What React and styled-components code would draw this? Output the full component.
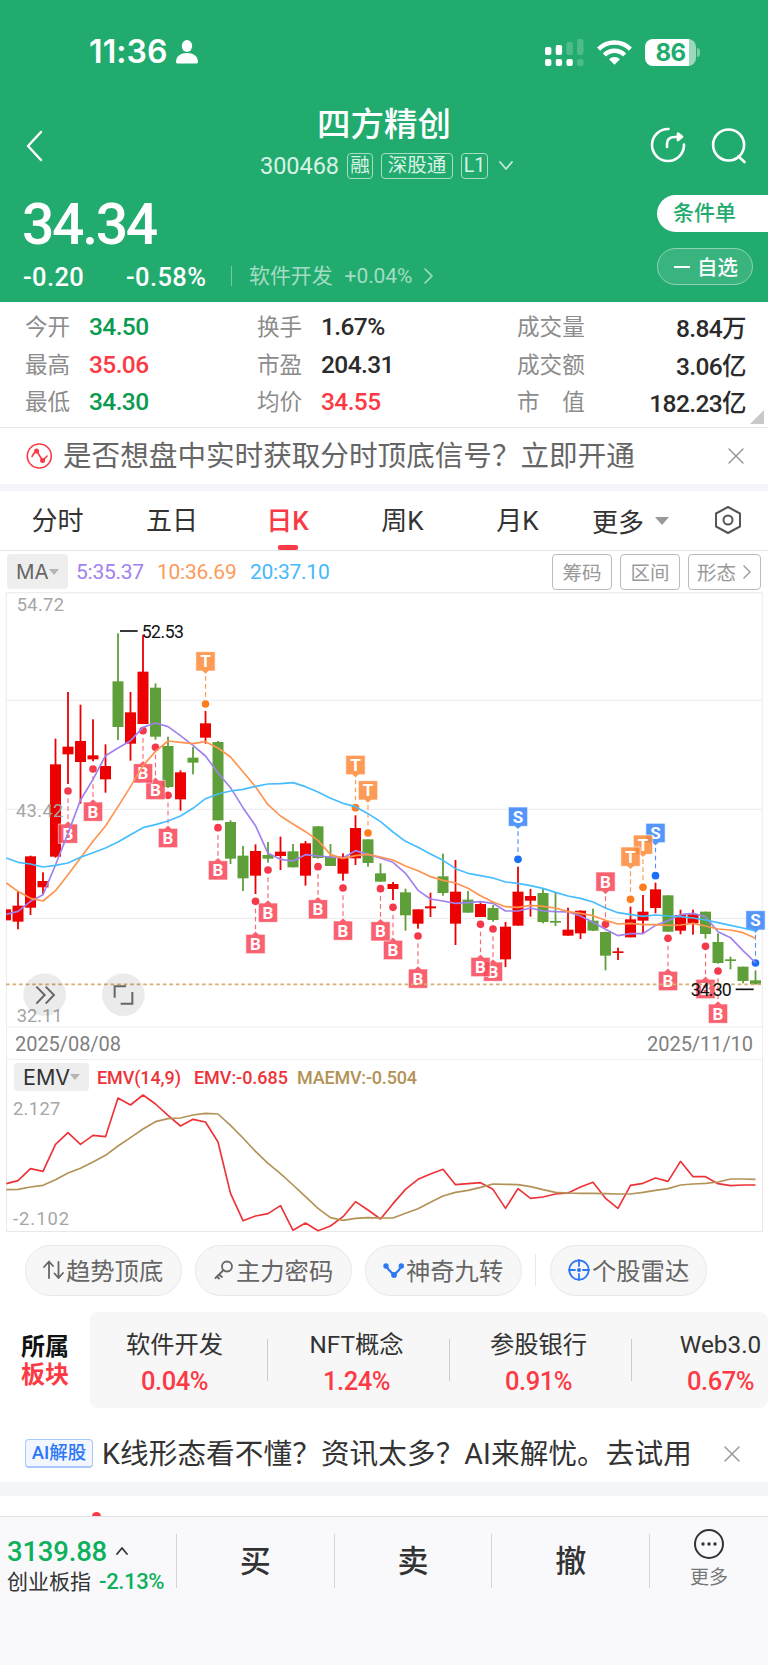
import React from 'react';
import styled, { createGlobalStyle } from 'styled-components';

const GlobalStyle = createGlobalStyle`
  * {
    box-sizing: border-box;
  }

  body {
    margin: 0;
    background: #fff;
    font-family: Roboto, 'Noto Sans CJK SC', sans-serif;
    color: #333;
  }
`;

const GREEN = '#22ab6e';
const UP = '#fb3a45';
const DOWN = '#0a9a50';

// chart series are stored in third-pixel units, one entry per trading day
const STEP = 37.5;
const START = 16.5;

// [rises, high, body top, body bottom, low]
const candles = [
  [1, 958, 958, 991, 991], [1, 905, 947, 995, 1018], [1, 797, 799, 953, 975],
  [1, 847, 873, 892, 912], [1, 446, 523, 800, 803], [1, 306, 470, 493, 582],
  [1, 344, 453, 516, 641], [1, 388, 496, 508, 514], [1, 463, 528, 568, 608],
  [0, 130, 274, 411, 450], [1, 306, 367, 461, 512], [1, 135, 245, 402, 402],
  [0, 280, 293, 440, 449], [0, 440, 468, 591, 594], [1, 541, 547, 628, 662],
  [0, 471, 503, 518, 553], [1, 363, 400, 443, 461], [0, 453, 456, 691, 691],
  [0, 691, 696, 806, 822], [0, 768, 797, 865, 903], [1, 763, 783, 857, 912],
  [0, 756, 795, 806, 818], [1, 740, 785, 798, 840], [0, 762, 784, 832, 832],
  [1, 753, 760, 857, 887], [0, 708, 709, 804, 806], [0, 762, 800, 828, 828],
  [1, 790, 800, 851, 872], [1, 676, 714, 805, 825], [0, 748, 748, 819, 830],
  [0, 820, 850, 875, 875], [1, 876, 882, 897, 930], [0, 896, 907, 976, 1022],
  [1, 958, 958, 1001, 1016], [1, 908, 949, 955, 981], [0, 791, 859, 909, 917],
  [1, 810, 905, 1001, 1065], [0, 903, 929, 968, 968], [1, 937, 942, 981, 981],
  [0, 945, 954, 990, 995], [1, 996, 1010, 1108, 1131], [1, 830, 905, 1007, 1007],
  [1, 897, 918, 932, 980], [0, 894, 909, 996, 1000], [0, 908, 993, 998, 1008],
  [1, 953, 1019, 1037, 1037], [1, 961, 962, 1030, 1047], [0, 956, 992, 1022, 1023],
  [0, 1025, 1026, 1097, 1141], [1, 1073, 1084, 1089, 1110], [1, 950, 988, 1042, 1042],
  [1, 915, 965, 992, 1030], [1, 878, 898, 954, 970], [0, 916, 916, 1025, 1025],
  [1, 959, 975, 1022, 1033], [1, 959, 973, 1000, 1034], [0, 965, 965, 1032, 1046],
  [0, 1030, 1056, 1119, 1121], [0, 1100, 1108, 1113, 1138], [0, 1130, 1130, 1173, 1180],
  [0, 1141, 1171, 1183, 1183]
];

const ma5 = [
  973, 964, 934, 914, 825, 730, 630, 568, 497, 474, 452, 412, 399, 410, 437, 466, 498, 549, 593, 653,
  707, 790, 808, 813, 794, 798, 801, 804, 782, 793, 804, 817, 850, 901, 927, 933, 940, 938, 935, 940,
  963, 963, 954, 963, 965, 966, 978, 997, 1018, 1037, 1031, 1031, 1006, 992, 974, 970, 980, 1025, 1043, 1082,
  1118
];
const ma10 = [
  879, 904, 925, 933, 902, 854, 804, 754, 708, 650, 590, 527, 484, 453, 457, 461, 455, 474, 501, 545,
  590, 644, 678, 702, 725, 751, 794, 805, 797, 793, 801, 810, 828, 842, 860, 871, 879, 895, 917, 936,
  950, 952, 946, 949, 954, 965, 970, 977, 991, 1002, 1000, 1004, 1004, 1006, 1005, 1000, 1008, 1017, 1020, 1028,
  1045
];
const ma20 = [
  804, 817, 822, 831, 826, 819, 802, 788, 774, 756, 734, 713, 704, 693, 678, 655, 626, 612, 603, 598,
  589, 582, 581, 578, 590, 606, 625, 640, 650, 671, 695, 726, 754, 772, 792, 811, 836, 850, 857, 864,
  876, 880, 887, 895, 907, 918, 925, 936, 954, 968, 974, 979, 975, 978, 980, 984, 990, 998, 1006, 1014,
  1023
];
const emv = [
  461, 452, 416, 424, 343, 308, 343, 316, 320, 204, 225, 195, 222, 256, 288, 268, 276, 336, 490, 572,
  558, 551, 527, 601, 579, 602, 588, 560, 515, 540, 567, 521, 478, 448, 432, 418, 464, 461, 458, 478,
  535, 476, 505, 501, 492, 489, 471, 457, 505, 535, 466, 460, 444, 454, 394, 440, 440, 461, 467, 465,
  465
];
const maemv = [
  479, 478, 471, 466, 449, 429, 415, 396, 376, 348, 323, 297, 275, 266, 264, 255, 250, 252, 286, 324,
  364, 400, 431, 465, 500, 535, 563, 571, 565, 563, 564, 564, 550, 536, 517, 498, 487, 481, 472, 462,
  463, 464, 470, 479, 487, 489, 490, 490, 491, 492, 492, 487, 481, 476, 465, 462, 460, 456, 447, 447,
  448
];

// [day, letter, dot y, above]
const signals = [
  [5, 'B', 603], [7, 'B', 537], [13, 'B', 616], [12, 'B', 472], [11, 'B', 422],
  [17, 'B', 713], [21, 'B', 840], [20, 'B', 934], [25, 'B', 830], [27, 'B', 894],
  [31, 'B', 952], [30, 'B', 896], [33, 'B', 1038], [39, 'B', 1017], [38, 'B', 1003],
  [53, 'B', 1045], [56, 'B', 1069], [57, 'B', 1143], [48, 'B', 1003, true],
  [16, 'T', 342, true], [28, 'T', 653, true], [29, 'T', 729, true],
  [41, 'S', 808, true], [52, 'S', 857, true], [51, 'T', 892, true], [50, 'T', 928, true],
  [60, 'S', 1119, true]
];

const signalColors = {
  B: ['#f5384a', '#f94859'],
  T: ['#fd7d1f', '#fd8a3a'],
  S: ['#1c70f8', '#3a85fb']
};

const dayX = i => START + i * STEP;
const toPoints = list => list.map((y, i) => `${Math.max(dayX(i), 19)},${y}`).join(' ');

const Page = styled.div`
  width: 768px;
  height: 1665px;
  overflow: hidden;
  display: flex;
  flex-direction: column;
  background: #fff;
  white-space: nowrap;
`;

const Header = styled.header`
  height: 302px;
  flex: none;
  background: ${GREEN};
  color: #fff;
`;

const StatusBar = styled.div`
  height: 104px;
  display: flex;
  align-items: center;
  padding: 0 68px 0 89px;
`;

const Clock = styled.div`
  width: 87px;
  font: 600 32px/40px Inter, sans-serif;
  letter-spacing: 0.1px;
`;

const StatusIcons = styled.div`
  margin-left: auto;
  display: flex;
  align-items: center;
  gap: 13px;
`;

const BatteryBody = styled.div`
  width: 51px;
  height: 27px;
  border-radius: 8px;
  background: linear-gradient(90deg, #fff 44px, #9bd9bd 44px);
  color: ${GREEN};
  text-align: center;
  font: 700 24px/27px Inter, sans-serif;
  letter-spacing: -0.5px;
`;

const Battery = styled.div`
  display: flex;
  align-items: center;
  gap: 1px;

  &::after {
    content: '';
    width: 3px;
    height: 9px;
    border-radius: 0 3px 3px 0;
    background: #7acca6;
  }
`;

const TitleBar = styled.div`
  height: 84px;
  display: grid;
  grid-template-columns: 160px 1fr 160px;
`;

const BackSlot = styled.div`
  padding: 26px 0 0 25px;
`;

const TitleBlock = styled.div`
  display: flex;
  flex-direction: column;
  align-items: center;
`;

const Title = styled.h1`
  margin: 0;
  font-size: 33.5px;
  font-weight: 500;
  line-height: 42px;
`;

const CodeRow = styled.div`
  display: flex;
  align-items: center;
  height: 40px;
  margin-left: 8px;
`;

const Code = styled.span`
  font-size: 23.5px;
  letter-spacing: -0.05px;
  margin-right: 8px;
  color: #d9f2e6;
`;

const Badge = styled.span`
  height: 26px;
  width: ${({ $width }) => $width}px;
  margin-right: 8px;
  border: 1px solid #a5dcc4;
  border-radius: 4px;
  text-align: center;
  font-size: 19.5px;
  line-height: 24px;
  color: #d9f2e6;
`;

const TitleActions = styled.div`
  display: flex;
  gap: 24px;
  padding: 23px 0 0 42px;
`;

const PriceArea = styled.div`
  height: 114px;
  display: flex;
  justify-content: space-between;
`;

const Price = styled.div`
  margin: 4px 0 0 22px;
  height: 66px;
  font-size: 57px;
  line-height: 66px;
  font-weight: 500;
  letter-spacing: -2.3px;
`;

const ChangeRow = styled.div`
  display: flex;
  align-items: center;
  height: 36px;
  padding-left: 23px;
`;

const Change = styled.span`
  width: ${({ $width }) => $width}px;
  padding-top: 1px;
  font-size: 25.5px;
  font-weight: 500;
  letter-spacing: 0.4px;
`;

const Industry = styled.span`
  display: flex;
  align-items: center;
  gap: 12px;
  height: 20px;
  padding-left: 17px;
  border-left: 1px solid #74c9a2;
  font-size: 21px;
  line-height: 18px;
  letter-spacing: -0.1px;
  color: #a3dcc3;
`;

const HeaderButtons = styled.div`
  display: flex;
  flex-direction: column;
  gap: 16px;
  padding-top: 7px;
  width: 111px;
`;

const OrderButton = styled.div`
  height: 37px;
  padding-left: 16px;
  border-radius: 19px 0 0 19px;
  background: #fff;
  color: ${GREEN};
  font-size: 21px;
  font-weight: 500;
  line-height: 37px;
`;

const FollowButton = styled.div`
  width: 96px;
  height: 37px;
  display: flex;
  align-items: center;
  gap: 7px;
  padding: 0 0 2px 16px;
  border: 1px solid #8fd3b5;
  border-radius: 19px;
  background: #3ab47f;
  font-size: 20.5px;
  font-weight: 500;

  &::before {
    content: '';
    width: 16px;
    height: 2px;
    margin-top: 3px;
    background: #fff;
  }
`;

const Quotes = styled.section`
  height: 126px;
  flex: none;
  display: grid;
  grid-template-columns: 232px 260px 229px;
  grid-auto-rows: 37.5px;
  align-items: center;
  padding: 6px 0 0 25px;
  border-bottom: 1px solid #e8e8e8;
`;

const Quote = styled.div`
  display: flex;
  align-items: center;
  justify-content: ${({ $spread }) => ($spread ? 'space-between' : 'flex-start')};
`;

const QuoteLabel = styled.span`
  min-width: ${({ $wide }) => ($wide ? 68 : 64)}px;
  padding-bottom: 2px;
  font-size: 22.6px;
  color: #8c8c8c;
  white-space: pre;
`;

const QuoteValue = styled.span`
  font-size: 24.5px;
  font-weight: 500;
  letter-spacing: -0.6px;
  color: ${({ $color }) => $color || '#2b2b2b'};
`;

const ExpandCorner = styled.i`
  align-self: flex-end;
  margin: -18px 4px 4px auto;
  flex: none;
  border-left: 14px solid transparent;
  border-bottom: 14px solid #c8c8c8;
`;

const Notice = styled.section`
  height: ${({ $height }) => $height}px;
  flex: none;
  display: flex;
  align-items: center;
  padding: ${({ $top }) => $top || 0}px ${({ $right }) => $right}px 0 25px;
  font-size: 28.6px;
  line-height: 38px;
  color: ${({ $color }) => $color};

  > :last-child {
    margin-left: auto;
  }
`;

const NoticeText = styled.span`
  margin-left: ${({ $gap }) => $gap}px;
  letter-spacing: ${({ $tracking }) => $tracking || 0}px;
`;

const AiBadge = styled.span`
  width: 68px;
  height: 29px;
  border: 1px solid #a9c8fb;
  border-bottom-width: 2px;
  border-radius: 4px;
  background: #f1f6ff;
  color: #2e78f6;
  text-align: center;
  font-size: 18.5px;
  font-weight: 500;
  line-height: 27px;
`;

const Band = styled.div`
  height: ${({ $height }) => $height}px;
  flex: none;
  background: #f3f5f9;
`;

const Tabs = styled.nav`
  height: 60px;
  flex: none;
  display: flex;
  border-bottom: 1px solid #e4e4e4;
`;

const Tab = styled.div`
  width: ${({ $width }) => $width}px;
  display: flex;
  align-items: center;
  justify-content: space-between;
  flex-direction: column;
  padding-top: 11px;
  font-size: 26px;
  line-height: 38px;
  color: ${({ $active }) => ($active ? UP : '#333')};
  font-weight: ${({ $active }) => ($active ? 500 : 400)};

  &::after {
    content: '';
    width: 20px;
    height: 5px;
    border-radius: 2px;
    background: ${({ $active }) => ($active ? UP : 'transparent')};
  }
`;

const MoreTab = styled.div`
  display: flex;
  align-items: center;
  gap: 11px;
  width: 131px;
  padding-left: 16px;
  font-size: 26px;
`;

const Triangle = styled.i`
  border: ${({ $size }) => $size}px solid transparent;
  border-top: ${({ $size }) => $size + 1}px solid ${({ $color }) => $color || '#999'};
  border-bottom: 0;
`;

const SettingsSlot = styled.div`
  padding: 14px 0 0 7px;
`;

const MaBar = styled.div`
  height: 40px;
  flex: none;
  display: flex;
  align-items: center;
  padding: 1px 7px 0;
`;

const Chip = styled.div`
  width: ${({ $width }) => $width}px;
  height: ${({ $height }) => $height}px;
  display: flex;
  align-items: center;
  justify-content: space-between;
  padding: 0 ${({ $pad }) => $pad || 9}px;
  border-radius: 4px;
  background: #eee;
  color: ${({ $color }) => $color || '#333'};
  font: 400 ${({ $size }) => $size || 21.5}px Inter, sans-serif;
`;

const Legend = styled.span`
  margin-left: ${({ $gap }) => $gap}px;
  width: ${({ $width }) => $width}px;
  font-size: ${({ $size }) => $size || 21}px;
  letter-spacing: ${({ $tracking }) => $tracking || -0.25}px;
  color: ${({ $color }) => $color};
`;

const Tools = styled.div`
  margin-left: auto;
  display: flex;
  gap: 8px;
`;

const Tool = styled.div`
  width: ${({ $width }) => $width || 60}px;
  height: 36px;
  display: flex;
  align-items: center;
  justify-content: center;
  gap: 7px;
  border: 1px solid #bbb;
  border-radius: 4px;
  font-size: 19.5px;
  color: #999;
`;

const Dates = styled.div`
  height: 32px;
  flex: none;
  display: flex;
  align-items: center;
  justify-content: space-between;
  margin: 0 5px 0 6px;
  padding: 0 9px 0 8px;
  border: 1px solid #eee;
  border-top: 0;
  font-size: 20px;
  letter-spacing: -0.05px;
  color: #808080;
`;

const EmvPanel = styled.div`
  height: 172px;
  flex: none;
  margin: 0 5px 0 6px;
  border: 1px solid #e8e8e8;
  border-top: 0;
`;

const EmvHead = styled.div`
  height: 35px;
  display: flex;
  align-items: center;
  padding: 0 0 1px 7px;
  font-weight: 500;
`;

const ChartSvg = styled.svg`
  display: block;
  flex: none;
  overflow: visible;
  font-family: Roboto, sans-serif;
`;

const Pills = styled.div`
  height: 80px;
  flex: none;
  display: flex;
  align-items: flex-start;
  gap: 13px;
  padding: 13px 0 0 25px;
`;

const Pill = styled.div`
  width: 157px;
  height: 51px;
  display: flex;
  align-items: center;
  padding: 0 0 2px 17px;
  gap: 2px;
  border: 1px solid #e8e8e8;
  border-radius: 26px;
  background: #f7f7f7;
  font-size: 24.3px;
  color: #666;
`;

const PillDivider = styled.i`
  width: 1px;
  height: 32px;
  margin: 9px 1px 0 0;
  background: #e8e8e8;
`;

const Sectors = styled.section`
  height: 96px;
  flex: none;
  display: flex;
`;

const SectorTitle = styled.div`
  width: 90px;
  padding: 21px 0 0 21px;
  font-size: 24px;
  font-weight: 700;
  line-height: 28px;
  color: #111;

  em {
    display: block;
    font-style: normal;
    color: ${UP};
  }
`;

const SectorList = styled.div`
  flex: 1;
  display: flex;
  align-items: center;
  overflow: hidden;
  border-radius: 8px;
  background: #f7f7f7;

  > :first-child {
    width: 177px;
    padding-right: 8px;
  }
`;

const Sector = styled.div`
  width: 182px;
  flex: none;
  display: flex;
  flex-direction: column;
  align-items: center;
  padding: 5px 3px 0 0;
  font-size: 24.3px;
  line-height: 37px;
  color: #333;
`;

const SectorDivider = styled.i`
  width: 1px;
  height: 42px;
  flex: none;
  margin-right: -1px;
  background: #ccc;
`;

const Percent = styled.span`
  font-size: 25.5px;
  font-weight: 500;
  letter-spacing: -0.5px;
  color: ${UP};
`;

const Peek = styled.div`
  height: 20px;
  flex: none;
  overflow: hidden;
  padding: 16px 0 0 92px;

  &::before {
    content: '';
    display: block;
    width: 9px;
    height: 9px;
    border-radius: 50%;
    background: ${UP};
  }
`;

const Footer = styled.footer`
  flex: 1;
  display: flex;
  padding-top: 17px;
  border-top: 1px solid #e2e2e6;
  background: #f9f9fc;
`;

const IndexBlock = styled.div`
  width: 176px;
  padding-left: 7px;
`;

const IndexValue = styled.div`
  display: flex;
  align-items: center;
  gap: 8px;
  height: 34px;
  font-size: 27.5px;
  font-weight: 500;
  letter-spacing: -0.2px;
  color: #0eb05c;
`;

const IndexName = styled.div`
  display: flex;
  align-items: center;
  gap: 8px;
  height: 28px;
  font-size: 21px;
  line-height: 28px;

  span {
    font-size: 22px;
    font-weight: 500;
    letter-spacing: -0.35px;
    color: #0eb05c;
  }
`;

const TradeButton = styled.div`
  width: 157.7px;
  height: 54px;
  border-left: 1px solid #d4d4d8;
  text-align: center;
  font-size: 31px;
  font-weight: 500;
  line-height: 55px;
`;

const MoreButton = styled.div`
  flex: 1;
  height: 54px;
  display: flex;
  flex-direction: column;
  align-items: center;
  border-left: 1px solid #d4d4d8;
  font-size: 19px;
  line-height: 28px;
  color: #777;

  svg {
    flex: none;
    margin: -6px 0 4px;
  }
`;

const Stroke = ({ width, height, d, color = '#fff', weight = 2, children }) => (
  <svg width={width} height={height} fill="none" stroke={color} strokeWidth={weight} strokeLinecap="round" strokeLinejoin="round">
    <path d={d} />
    {children}
  </svg>
);

const CloseIcon = () => (
  <Stroke width="18" height="18" d="M2 2l14 14M16 2L2 16" color="#999" weight={1.5} />
);

const SignalIcon = () => {
  const tops = [8, 6, 3, 0];
  return (
    <svg width="39" height="27" fill="#fff">
      {tops.map((y, i) => (
        <React.Fragment key={y}>
          <rect x={i * 10.7} y={y} width="6.4" height={16 - y} rx="2" opacity={i > 1 ? 0.2 : 1} />
          <rect x={i * 10.7} y="20" width="6.4" height="7" rx="2" opacity={i > 2 ? 0.2 : 1} />
        </React.Fragment>
      ))}
    </svg>
  );
};

const WifiIcon = () => (
  <svg width="35" height="25" viewBox="0 0 35 25" fill="none" stroke="#fff" strokeWidth="4.4">
    <path d="M1.6 9.1a22.6 22.6 0 0 1 31.8 0" />
    <path d="M7.4 15a14.3 14.3 0 0 1 20.2 0" />
    <path d="M12 19.2a8 8 0 0 1 11 0l-5.5 5.6z" fill="#fff" stroke="none" />
  </svg>
);

const Signal = ({ day, letter, y, above }) => {
  const side = above ? -1 : 1;
  const [dot, fill] = signalColors[letter];
  return (
    <g transform={`translate(${dayX(day)} ${y})`}>
      <line y1={side * 22} y2={side * 92} stroke={dot} strokeWidth="3.5" strokeDasharray="14 10" opacity="0.75" />
      <circle r="11.5" fill={dot} />
      <g opacity="0.86">
        <path
          transform={`scale(1 ${side})`}
          d="M-29 99H-10L0 90L10 99H29V157H-29Z"
          fill={fill}
          stroke="#fff"
          strokeWidth="2"
        />
        <text y={side * 128 + 18} textAnchor="middle" fontSize="51" fontWeight="700" fill="#fff">{letter}</text>
      </g>
    </g>
  );
};

const Line = ({ list, color }) => (
  <polyline points={toPoints(list)} fill="none" stroke={color} strokeWidth="5" strokeLinejoin="round" />
);

const KLineChart = () => (
  <ChartSvg width="768" height="437" viewBox="0 3 2304 1311">
    <g stroke="#eee" strokeWidth="3.5">
      {[8, 331, 658, 985, 1311].map(y => <line key={y} x1="18" x2="2287" y1={y} y2={y} />)}
      <line x1="19" x2="19" y1="8" y2="1314" />
      <line x1="2287" x2="2287" y1="8" y2="1314" />
    </g>
    {candles.map(([up, high, top, bottom, low], i) => {
      const color = up ? '#ec0000' : '#5e9f3a';
      const left = Math.max(dayX(i) - 16.5, 18);
      return (
        <g key={i} fill={color}>
          {i > 0 && <rect x={dayX(i) - 2.7} y={high} width="5.4" height={low - high} />}
          <rect x={left} y={top} width={dayX(i) + 16.5 - left} height={bottom - top} />
        </g>
      );
    })}
    <g fontSize="55" fill="#a6a6a6">
      <text x="50" y="64" textLength="142">54.72</text>
      <text x="48" y="680" textLength="142">43.42</text>
      <text x="50" y="1296" textLength="138">32.11</text>
    </g>
    {signals.map(([day, letter, y, above]) => (
      <Signal key={day} day={day} letter={letter} y={y} above={above} />
    ))}
    <Line list={ma5} color="#a181ee" />
    <Line list={ma10} color="#ff9450" />
    <Line list={ma20} color="#46bdff" />
    <line x1="18" x2="2287" y1="1183" y2="1183" stroke="#d8ae74" strokeWidth="5" strokeDasharray="11 8.6" />
    <g stroke="#111" strokeWidth="5">
      <line x1="360" x2="413" y1="123" y2="123" />
      <line x1="2207" x2="2261" y1="1198" y2="1198" />
    </g>
    <g fontSize="53" fill="#111">
      <text x="425" y="143" textLength="127">52.53</text>
      <text x="2072" y="1217" textLength="123">34.30</text>
    </g>
    <circle cx="134" cy="1214" r="64" fill="#000" opacity="0.08" />
    <circle cx="370" cy="1214" r="64" fill="#000" opacity="0.08" />
    <g fill="none" stroke="#666" strokeWidth="6">
      <path d="M109 1190l25 25-25 26M137 1190l25 25-25 26" />
      <path d="M344 1223v-34h34M362 1241h35v-35" />
    </g>
  </ChartSvg>
);

const EmvChart = () => (
  <ChartSvg width="755" height="136" viewBox="21 195 2265 408">
    <g fontSize="55" fill="#a6a6a6">
      <text x="39" y="255" textLength="142">2.127</text>
      <text x="39" y="586" textLength="168">-2.102</text>
    </g>
    <Line list={emv} color="#ee3338" />
    <Line list={maemv} color="#b39257" />
  </ChartSvg>
);

const TrendIcon = () => (
  <Stroke width="21" height="22" d="M1 8l5-5.500 4 4.500M6 3v16M15.500 3v16l-4-4.500M15.500 19l4.500-5" color="#666" weight={1.8} />
);

const KeyIcon = () => (
  <Stroke width="21" height="22" d="M10.500 11L2.500 19M6 15.500l3 2.500M4 17.500l2 2" color="#666" weight={1.8}>
    <circle cx="14" cy="7.500" r="5" />
  </Stroke>
);

const NineIcon = () => (
  <Stroke width="21" height="22" d="M3 7l3 4 5 5 5-5 2.500-4" color="#2e78f6" weight={2.2}>
    <g fill="#2e78f6" stroke="none">
      <circle cx="3" cy="7" r="2.700" />
      <circle cx="18.300" cy="7" r="2.700" />
      <circle cx="11" cy="16" r="2.900" />
    </g>
  </Stroke>
);

const RadarIcon = () => (
  <Stroke width="22" height="22" d="M11 1v6M11 15v6M1 11h6M15 11h6" color="#2e78f6" weight={1.8}>
    <circle cx="11" cy="11" r="9.700" />
    <circle cx="11" cy="11" r="1.200" fill="#2e78f6" />
  </Stroke>
);

const quotes = [
  ['今开', '34.50', DOWN], ['换手', '1.67%'], ['成交量', '8.84万'],
  ['最高', '35.06', UP], ['市盈', '204.31'], ['成交额', '3.06亿'],
  ['最低', '34.30', DOWN], ['均价', '34.55', UP], ['市　值', '182.23亿']
];

const tabs = [['分时', 115], ['五日', 114], ['日K', 117], ['周K', 113], ['月K', 117]];

const sectors = [['软件开发', '0.04%'], ['NFT概念', '1.24%'], ['参股银行', '0.91%'], ['Web3.0', '0.67%']];

const App = () => {
  return (
    <Page>
      <GlobalStyle />
      <Header>
        <StatusBar>
          <Clock>11:36</Clock>
          <svg width="22" height="24" fill="#fff">
            <ellipse cx="11" cy="6" rx="5.200" ry="6" />
            <path d="M0 22c0-6 5-9 11-9s11 3 11 9q0 1.500-2 1.500H2q-2 0-2-1.500z" />
          </svg>
          <StatusIcons>
            <SignalIcon />
            <WifiIcon />
            <Battery><BatteryBody>86</BatteryBody></Battery>
          </StatusIcons>
        </StatusBar>
        <TitleBar>
          <BackSlot>
            <Stroke width="20" height="32" d="M16 2L3 16l13 14" weight={2.4} />
          </BackSlot>
          <TitleBlock>
            <Title>四方精创</Title>
            <CodeRow>
              <Code>300468</Code>
              <Badge $width={26}>融</Badge>
              <Badge $width={72}>深股通</Badge>
              <Badge $width={27}>L1</Badge>
              <Stroke width="20" height="12" d="M4 2l6 7 6-7" color="#c5ebd9" weight={1.8} />
            </CodeRow>
          </TitleBlock>
          <TitleActions>
            <Stroke width="36" height="36" d="M18.500 2A16 16 0 1 0 34 17.500M17 20v-3q0-7 8-7h5M28 6.500l4 3.300-4 3.300z" weight={2.6} />
            <Stroke width="38" height="38" d="M28.500 29.500l6 5.500" weight={2.6}>
              <circle cx="18.600" cy="18" r="15.500" />
            </Stroke>
          </TitleActions>
        </TitleBar>
        <PriceArea>
          <div>
            <Price>34.34</Price>
            <ChangeRow>
              <Change $width={103}>-0.20</Change>
              <Change $width={105}>-0.58%</Change>
              <Industry>
                软件开发
                <span>+0.04%</span>
                <Stroke width="10" height="18" d="M1 2l7 7-7 7" color="#a3dcc3" weight={1.6} />
              </Industry>
            </ChangeRow>
          </div>
          <HeaderButtons>
            <OrderButton>条件单</OrderButton>
            <FollowButton>自选</FollowButton>
          </HeaderButtons>
        </PriceArea>
      </Header>
      <Quotes>
        {quotes.map(([label, value, color], i) => (
          <Quote key={label} $spread={i % 3 === 2}>
            <QuoteLabel $wide={i % 3 === 2}>{label}</QuoteLabel>
            <QuoteValue $color={color}>{value}</QuoteValue>
          </Quote>
        ))}
      </Quotes>
      <ExpandCorner />
      <Notice $height={56} $right={23} $color="#666">
        <Stroke width="28" height="28" d="M7 14.500q1-3 4.600-5.500l6 9.500 4.500-4.500" color={UP} weight={1.6}>
          <circle cx="14.300" cy="14" r="12" />
          <circle cx="11.600" cy="9" r="1.700" fill={UP} />
          <circle cx="17.600" cy="18.500" r="1.700" fill={UP} />
        </Stroke>
        <NoticeText $gap={10}>是否想盘中实时获取分时顶底信号？立即开通</NoticeText>
        <CloseIcon />
      </Notice>
      <Band $height={7} />
      <Tabs>
        {tabs.map(([label, width]) => (
          <Tab key={label} $width={width} $active={label === '日K'}>{label}</Tab>
        ))}
        <MoreTab>更多<Triangle $size={7} /></MoreTab>
        <SettingsSlot>
          <Stroke width="28" height="30" d="M14 2l12 6.500v13L14 28 2 21.500v-13z" color="#555">
            <circle cx="14" cy="15" r="4.500" />
          </Stroke>
        </SettingsSlot>
      </Tabs>
      <MaBar>
        <Chip $width={61} $height={35} $size={20.5} $color="#666">MA<Triangle $size={5} $color="#b5b5b5" /></Chip>
        <Legend $gap={8} $width={69} $color="#a181ee">5:35.37</Legend>
        <Legend $gap={12} $width={81} $color="#fd9a57">10:36.69</Legend>
        <Legend $gap={12} $width={81} $color="#46b8fc">20:37.10</Legend>
        <Tools>
          <Tool>筹码</Tool>
          <Tool>区间</Tool>
          <Tool $width={73}>
            形态
            <Stroke width="9" height="16" d="M1 2l6 6-6 6" color="#999" weight={1.4} />
          </Tool>
        </Tools>
      </MaBar>
      <KLineChart />
      <Dates>
        <span>2025/08/08</span>
        <span>2025/11/10</span>
      </Dates>
      <EmvPanel>
        <EmvHead>
          <Chip $width={75} $height={28}>EMV<Triangle $size={5} $color="#b5b5b5" /></Chip>
          <Legend $gap={8} $width={85} $size={18} $tracking={-0.1} $color="#ee3338">EMV(14,9)</Legend>
          <Legend $gap={12} $width={95} $size={18} $tracking={-0.05} $color="#ee3338">EMV:-0.685</Legend>
          <Legend $gap={8} $width={121} $size={18} $tracking={-0.2} $color="#b39257">MAEMV:-0.504</Legend>
        </EmvHead>
        <EmvChart />
      </EmvPanel>
      <Pills>
        <Pill><TrendIcon />趋势顶底</Pill>
        <Pill><KeyIcon />主力密码</Pill>
        <Pill><NineIcon />神奇九转</Pill>
        <PillDivider />
        <Pill><RadarIcon />个股雷达</Pill>
      </Pills>
      <Sectors>
        <SectorTitle>所属<em>板块</em></SectorTitle>
        <SectorList>
          {sectors.map(([name, percent], i) => (
            <React.Fragment key={name}>
              {i > 0 && <SectorDivider />}
              <Sector>
                {name}
                <Percent>{percent}</Percent>
              </Sector>
            </React.Fragment>
          ))}
        </SectorList>
      </Sectors>
      <Notice $height={74} $top={17} $right={27} $color="#333">
        <AiBadge>AI解股</AiBadge>
        <NoticeText $gap={9} $tracking={0.1}>K线形态看不懂？资讯太多？AI来解忧。去试用</NoticeText>
        <CloseIcon />
      </Notice>
      <Band $height={14} />
      <Peek />
      <Footer>
        <IndexBlock>
          <IndexValue>
            3139.88
            <Stroke width="14" height="10" d="M2 8l5-6 5 6" color="#333" weight={1.8} />
          </IndexValue>
          <IndexName>创业板指<span>-2.13%</span></IndexName>
        </IndexBlock>
        <TradeButton>买</TradeButton>
        <TradeButton>卖</TradeButton>
        <TradeButton>撤</TradeButton>
        <MoreButton>
          <svg width="32" height="32" fill="#333">
            <circle cx="16" cy="16" r="14" fill="none" stroke="#333" strokeWidth="2" />
            <circle cx="10" cy="16" r="1.700" />
            <circle cx="16" cy="16" r="1.700" />
            <circle cx="22" cy="16" r="1.700" />
          </svg>
          更多
        </MoreButton>
      </Footer>
    </Page>
  );
};

export default App;
